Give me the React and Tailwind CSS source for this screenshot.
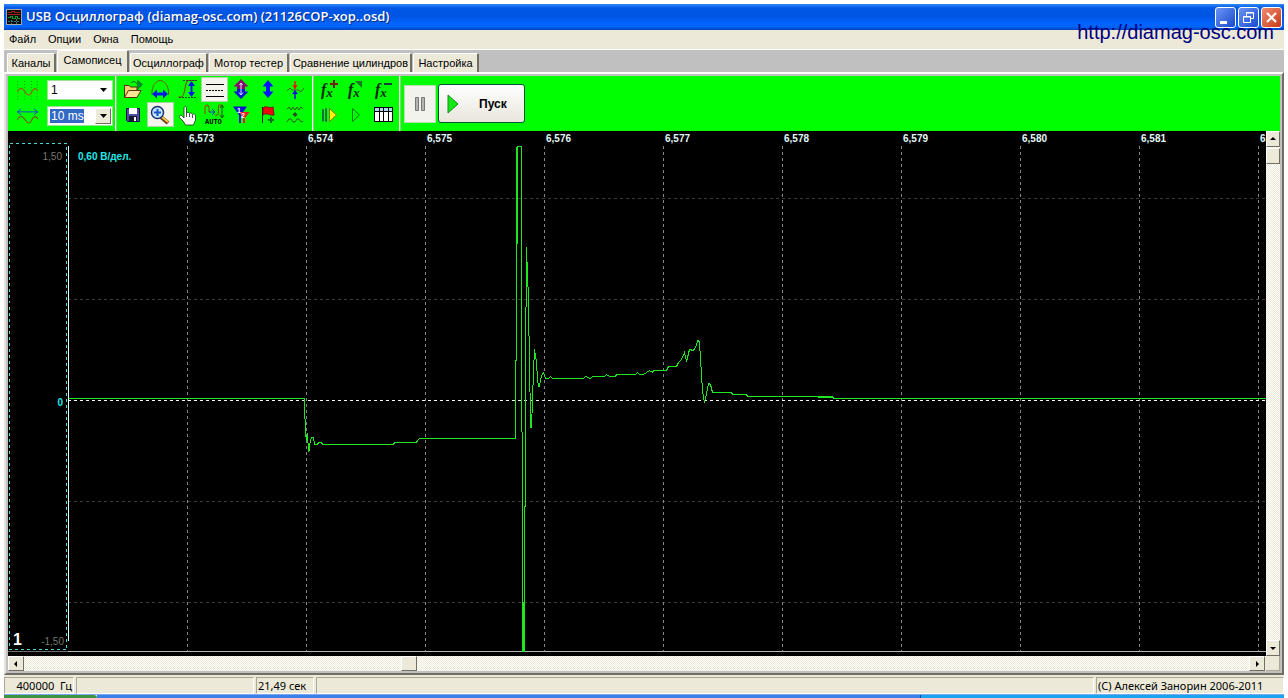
import React, { useState } from "react";
import clsx from "clsx";

const tabs = [
  { label: "Каналы", width: "w-[49px]" },
  { label: "Самописец", width: "w-[72px]" },
  { label: "Осциллограф", width: "w-[78px]" },
  { label: "Мотор тестер", width: "w-[80px]" },
  { label: "Сравнение цилиндров", width: "w-[122px]" },
  { label: "Настройка", width: "w-[66px]" },
];

const menu = ["Файл", "Опции", "Окна", "Помощь"];

const times = ["6,573", "6,574", "6,575", "6,576", "6,577", "6,578", "6,579", "6,580", "6,581", "6,582"];

const trace =
  "60,267 296,267 296,271 297,303 298,308 299,302 300,320 301,315 302,309 303,306 305,306 306,313 309,313 310,311 313,311 314,313 385,313 386,311 408,311 409,309 411,307 507,307 507,301 508,161 509,15 513,15 513,68 514,520 516,520 517,239 518,116 519,144 520,167 521,239 522,282 523,296 524,269 525,239 526,218 528,231 529,247 530,255 531,255 532,249 533,244 535,241 536,244 537,247 540,247 542,245 544,247 575,247 577,245 582,247 584,245 596,245 598,243 601,245 607,245 608,243 627,243 629,241 631,243 635,243 638,241 641,239 644,241 645,239 658,239 660,235 668,235 670,231 673,228 676,221 678,230 681,218 685,219 688,214 689,209 691,210 692,228 694,259 696,271 698,262 700,252 702,253 704,261 723,261 724,263 738,263 739,265 809,265 824,265 825,267 2400,267";

// 27x25 toolbar cell
const Glyph = ({ children }) => (
  <svg viewBox="0 0 27 25" className="block h-[25px] w-[27px]" fill="none" aria-hidden="true">
    {children}
  </svg>
);

const fx = (
  <text x="4" y="18" fontFamily="Liberation Serif, serif" fontSize="16" fontStyle="italic" fontWeight="bold" fill="#062806">
    f<tspan dy="2" fontSize="13">x</tspan>
  </text>
);

const viewTools = [
  {
    name: "Открыть",
    art: (
      <>
        <path d="M4.500 20V8.500H9L10.500 10H17V14" fill="#f4d070" stroke="#4a2c00" />
        <path d="M4.500 20.500L8.500 13.500H21L17 20.500Z" fill="#ffe498" stroke="#5a3500" />
        <path d="M11 6C13 4 15 4 17 7" stroke="#105030" />
        <path d="M17.500 3L22.500 7.500L17.500 13Z" fill="#008b28" stroke="#006020" strokeWidth=".5" />
      </>
    ),
  },
  {
    name: "Период",
    art: (
      <>
        <path d="M5 18V14C6 7 10 3.500 13 3.500C17 3.500 21 8 21.500 14V18" stroke="#6d5d10" />
        <path d="M5 17L10 12.500V15.500H16V12.500L21 17L16 21.500V18.500H10V21.500Z" fill="#0018e8" />
      </>
    ),
  },
  {
    name: "Амплитуда",
    art: (
      <>
        <path d="M4 20H7C12 20 10 5 14 3.500H21" stroke="#82501b" strokeWidth="1.200" />
        <path d="M9 3.500H23M5 20.500H23" stroke="#155020" strokeDasharray="2 1" />
        <path d="M17.500 4L21 9H18.500V15H21L17.500 20L14 15H16.500V9H14Z" fill="#0018e8" />
      </>
    ),
  },
  {
    name: "Уровни",
    active: true,
    art: (
      <g stroke="#000" strokeWidth="1" shapeRendering="crispEdges">
        <path d="M5 7.500H23M5 19.500H23" />
        <path d="M5 13.500H23" strokeDasharray="2 1" />
      </g>
    ),
  },
  {
    name: "Масштаб по вертикали",
    art: (
      <>
        <path d="M13 2L20.500 9.500H17V12H9V9.500H5.500Z" fill="#850b6c" />
        <path d="M9 12H17V14.500H20.500L13 22L5.500 14.500H9Z" fill="#0014d8" />
        <path d="M13 6V18M11.500 8L13 6L14.500 8M11 15.500L13 18L15 15.500" stroke="#e4dcff" />
      </>
    ),
  },
  { name: "Высота", art: <path d="M13 3L18.500 9.500H15V14.500H18.500L13 21L7.500 14.500H11V9.500H7.500Z" fill="#0012ff" /> },
  {
    name: "Точка",
    art: (
      <>
        <path d="M5 14L8 11L10 13H16L19 15L22 11" stroke="#426711" />
        <path d="M13 4V10" stroke="#e01810" strokeWidth="1.500" />
        <path d="M10.500 8H15.500L13 13Z" fill="#f01208" />
        <path d="M13 13L16 17H10Z" fill="#0012d8" />
        <path d="M13 15V22" stroke="#0012d8" strokeWidth="1.500" />
      </>
    ),
  },
  {
    name: "Сохранить",
    art: (
      <>
        <path d="M6.500 6.500H19.500V19.500H7.500L6.500 18.500Z" fill="#4b4f9d" stroke="#101044" />
        <rect x="9" y="6" width="8" height="6" fill="#fff" />
        <rect x="9" y="14" width="8" height="5" fill="#181830" />
        <rect x="14" y="15" width="2" height="4" fill="#fff" />
      </>
    ),
  },
  {
    name: "Лупа",
    active: true,
    art: (
      <>
        <path d="M14 15L21 21" stroke="#5d4515" strokeWidth="4" />
        <path d="M15 15L21 20" stroke="#ffc34d" strokeWidth="2" />
        <circle cx="10.500" cy="10.500" r="6" fill="#c6e8ff" stroke="#1b2f75" strokeWidth="1.500" />
        <path d="M7 10.500H14M10.500 7V14" stroke="#1555c7" strokeWidth="2" />
      </>
    ),
  },
  {
    name: "Рука",
    art: (
      <path
        d="M10 16V6C10 4 12.500 4 12.500 6V11C13 10 15 10 15.500 11.500C16.500 10.500 18 11 18.500 12.500C20 11.500 21.500 12 21.500 14V18L19.500 23H11.500L9 19L5.500 15.500C4.500 13 7.500 12 10 16ZM12.500 11V15M15.500 12V15M18.500 13V16"
        fill="#fff"
        stroke="#182c18"
        strokeWidth=".8"
      />
    ),
  },
  {
    name: "Авто",
    art: (
      <>
        <path d="M4 12V6C5 1 8 3 8 7V10M14 13C20 15 16 5 18 3H22" stroke="#8c5310" strokeWidth="1.200" />
        <path d="M8 10H13M11 7L14 10L11 13" stroke="#173bb5" />
        <path d="M21 4V16M19 6L21 3L23 6M19 13L21 16L23 13" stroke="#17501b" />
        <text x="4" y="22" fontFamily="Liberation Mono, monospace" fontWeight="bold" fontSize="7" fill="#000">
          AUTO
        </text>
      </>
    ),
  },
  {
    name: "Маркеры",
    art: (
      <>
        <path d="M5 4.500H19L13 13V21H11V13Z" fill="#0716ce" />
        <path d="M11 10H21.500L17 16V21H15V16Z" fill="#ee1a26" />
        <text x="9" y="11" fontFamily="Liberation Sans, sans-serif" fontWeight="bold" fontSize="7" fill="#fff">
          1
        </text>
        <text x="13" y="16" fontFamily="Liberation Sans, sans-serif" fontWeight="bold" fontSize="7" fill="#fff">
          2
        </text>
      </>
    ),
  },
  {
    name: "Флаг",
    art: (
      <>
        <path d="M7.500 5V21" stroke="#172010" />
        <path d="M8 6C11 3 14 7 18 5L19 13C15 14 12 10 8 13Z" fill="#ef080c" stroke="#761407" />
        <path d="M16 15V21M13 18H19" stroke="#08731e" strokeWidth="2" />
      </>
    ),
  },
  {
    name: "Сравнить волны",
    art: (
      <>
        <path d="M5 7L7 5L9 8L11 5L13 8L15 5L17 8L19 5L21 7" stroke="#345c1b" />
        <path d="M5 20L7 17L9 17L11 20L13 20L15 17L17 17L19 20L21 19" stroke="#345c1b" />
        <path d="M13 10L15.500 12.500L13 15L10.500 12.500Z" fill="#244a26" />
      </>
    ),
  },
];

const mathTools = [
  { name: "Добавить функцию", art: <>{fx}<path d="M17 3V11M13 7H21" stroke="#751e16" strokeWidth="2" /></> },
  { name: "Изменить функцию", art: <>{fx}<path d="M11 4H18V11Z" fill="#16791d" /></> },
  { name: "Удалить функцию", art: <>{fx}<path d="M13 7H21" stroke="#164044" strokeWidth="2" /></> },
  {
    name: "Следующий кадр",
    art: (
      <>
        <path d="M5.500 19.500V7.500H6.500V19.500M8.500 19.500V6.500H9.500V19.500Z" fill="#65eb9b" stroke="#12733a" />
        <path d="M12.500 6.500L19.500 13L12.500 19.500Z" fill="#fff600" stroke="#827513" />
      </>
    ),
  },
  { name: "Воспроизвести", art: <path d="M8.500 6.500L15.500 13L8.500 19.500Z" stroke="#087c0b" /> },
  {
    name: "Таблица",
    art: (
      <g shapeRendering="crispEdges">
        <path d="M3.500 5.500H21.500V19.500H3.500Z" fill="#fff" stroke="#000" />
        <path d="M4 6H21V9H4Z" fill="#a9daef" />
        <path d="M4 9.500H21M8.500 6V19M12.500 6V19M17.500 6V19" stroke="#000" />
      </g>
    ),
  },
];

const ToolGrid = ({ tools, columns }) => (
  <div className={clsx("mt-px mr-px ml-[3px] grid content-start", columns)}>
    {tools.map((tool) => (
      <button
        key={tool.name}
        aria-label={tool.name}
        className={clsx("h-[25px] w-[27px]", tool.active && "bg-[#f5f4ec] ring-1 ring-inset ring-[#a4dba0]")}
      >
        <Glyph>{tool.art}</Glyph>
      </button>
    ))}
  </div>
);

const Divider = () => <div className="w-0.5 border-l border-[#f0ffe8] bg-[#85d47c]" />;

const Combo = ({ label, value, options, selected }) => (
  <div className="relative h-5 w-[66px] border border-[#9ce294] bg-white">
    <select
      aria-label={label}
      defaultValue={value}
      className={clsx(
        "block h-full w-full appearance-none px-[3px] text-xs leading-4 outline-none",
        selected
          ? "bg-[linear-gradient(#316ac5,#316ac5)] bg-[length:34px_14px] bg-[position:2px_2px] bg-no-repeat text-white"
          : "text-black"
      )}
    >
      {options.map((o) => (
        <option key={o}>{o}</option>
      ))}
    </select>
    <div
      className={clsx(
        "pointer-events-none absolute inset-y-px right-px flex w-4 items-center justify-center",
        selected && "border border-r-[#716f64] border-b-[#716f64] border-t-white border-l-white bg-[#ece9d8]"
      )}
    >
      <svg viewBox="0 0 7 4" className="h-1 w-[7px]">
        <path d="M0 0H7L3.500 4Z" fill="#000" />
      </svg>
    </div>
  </div>
);

const arrows = {
  up: "M4 2L7 5H1Z",
  down: "M1 3H7L4 6Z",
  left: "M5 1V7L2 4Z",
  right: "M3 1L6 4L3 7Z",
};

const ScrollButton = ({ dir, label, className }) => (
  <button
    aria-label={label}
    className={clsx(
      "flex shrink-0 items-center justify-center border border-t-white border-l-white border-r-[#716f64] border-b-[#716f64] bg-[#ece9d8]",
      className
    )}
  >
    {dir && (
      <svg viewBox="0 0 8 8" className="size-2">
        <path d={arrows[dir]} fill="#000" />
      </svg>
    )}
  </button>
);

const track = "bg-[repeating-conic-gradient(#fff_0_25%,#ece9d8_0_50%)] bg-[length:2px_2px]";

const Chart = () => (
  <svg className="block h-[525px] w-full min-w-0 flex-1 bg-black" role="img" aria-label="Осциллограмма">
    <g shapeRendering="crispEdges" fill="none">
      {[67, 168, 370, 471].map((y) => (
        <line key={y} x1="60" x2="100%" y1={y + 0.5} y2={y + 0.5} stroke="#3c3c3c" strokeDasharray="3 3" />
      ))}
      {times.map((t, i) => (
        <line key={t} x1={179.5 + i * 119} x2={179.5 + i * 119} y1="15" y2="520" stroke="#858585" strokeDasharray="3 3" />
      ))}
      <line x1="60" x2="100%" y1="269.500" y2="269.500" stroke="#fff" strokeDasharray="3 3" />
      <rect x="1.500" y="12.500" width="57" height="506" stroke="#4cd8d8" strokeDasharray="3 3" />
      <line x1="60.500" x2="60.500" y1="15" y2="510" stroke="#e8ffff" />
      <line x1="0" x2="60" y1="520.500" y2="520.500" stroke="#707070" />
      <line x1="60" x2="100%" y1="520.500" y2="520.500" stroke="#b4b8b4" />
      <g transform="translate(0.5 0.5)" stroke="#1fe81f">
        <polyline points={trace} />
        <path d="M508.500 15V112M518.500 132V148M514.500 470V520M522.500 283V296M300.500 314V319M809 265.500H824" strokeWidth="2" />
      </g>
    </g>
    <g fontFamily="Liberation Sans, sans-serif" fontSize="10">
      <g fontWeight="bold" fill="#e0f8f8">
        {times.map((t, i) => (
          <text key={t} x={181 + i * 119} y="11">
            {t}
          </text>
        ))}
      </g>
      <g fontWeight="bold" fill="#20e8e8">
        <text x="70" y="29">0,60 В/дел.</text>
        <text x="55" y="275" textAnchor="end">0</text>
      </g>
      <g fill="#77776c" textAnchor="end">
        <text x="54" y="29">1,50</text>
        <text x="56" y="514">-1,50</text>
      </g>
      <text x="5" y="514" fontSize="16" fontWeight="bold" fill="#fff">1</text>
    </g>
  </svg>
);

const WindowButton = ({ label, close, children }) => (
  <button
    aria-label={label}
    className={clsx(
      "size-[21px] rounded-[3px] border border-white bg-linear-to-br",
      close ? "from-[#ee8b6c] to-[#c83412]" : "from-[#6b93f4] to-[#1849cc]"
    )}
  >
    <svg viewBox="0 0 19 19" className="size-[19px]" fill="none" stroke="#fff">
      {children}
    </svg>
  </button>
);

const StatusPanel = ({ className, children }) => (
  <div
    className={clsx(
      "h-[17px] overflow-hidden whitespace-nowrap border border-t-[#aca899] border-l-[#aca899] border-r-white border-b-white px-px leading-4",
      className
    )}
  >
    {children}
  </div>
);

const App = () => {
  const [activeTab, setActiveTab] = useState("Самописец");

  return (
    <div className="overflow-hidden bg-white px-1 pt-1 font-['Liberation_Sans',sans-serif] text-[11px] text-black">
      {/* Title bar */}
      <header className="relative flex h-[26px] items-center bg-[linear-gradient(#2f8af5,#0058e6_4px,#0054e3_12px,#0065ff_20px,#0062f5_23px,#0140b8)] px-0.5">
        <svg viewBox="0 0 16 16" className="size-4" shapeRendering="crispEdges" fill="none" aria-hidden="true">
          <path d="M.5.500H15.500V15.500H.5Z" fill="#080c0c" stroke="#a8a8a8" />
          <path d="M2 3H5V2H8V3H14M2 5H14" stroke="#a02018" />
          <path d="M2 8.500H4V7H6V9H9V7H11V9H14" stroke="#169828" />
          <path d="M5 11V15M10 10V15M2 12.500H14" stroke="#397e78" strokeDasharray="2 1" />
        </svg>
        <h1 className="ml-1 font-['Open_Sans',sans-serif] text-[13px] font-semibold whitespace-nowrap text-white [text-shadow:1px_1px_#0a2a82]">
          USB Осциллограф (diamag-osc.com) (21126СОР-хор..osd)
        </h1>
        <div className="ml-auto flex gap-0.5">
          <WindowButton label="Свернуть">
            <path d="M4 14.500H11" strokeWidth="3" />
          </WindowButton>
          <WindowButton label="Восстановить">
            <path d="M7.500 8V4.500H14.500V10.500H12M7 5H15M4.500 8.500H11.500V14.500H4.500ZM4 9H12" />
          </WindowButton>
          <WindowButton label="Закрыть" close>
            <path d="M5 5L14 14M14 5L5 14" strokeWidth="2.200" />
          </WindowButton>
        </div>
        <a
          href="http://diamag-osc.com"
          className="absolute top-4 right-2.5 text-xl leading-6 text-[#000080]"
        >
          http://diamag-osc.com
        </a>
      </header>

      {/* Menu */}
      <nav className="flex h-5 items-center gap-3 border-b border-white bg-[#ece9d8] pl-[5px]">
        {menu.map((item) => (
          <button key={item}>{item}</button>
        ))}
      </nav>

      {/* Tabs */}
      <div role="tablist" className="flex h-[22px] items-end gap-px bg-[#c0c0c0] pl-[3px]">
        {tabs.map((tab) => {
          const active = tab.label === activeTab;
          return (
            <button
              key={tab.label}
              role="tab"
              aria-selected={active}
              onClick={() => setActiveTab(tab.label)}
              className={clsx(
                "rounded-t-[2px] border-t border-r-2 border-l border-t-white border-r-[#716f64] border-l-white bg-[#ece9d8] whitespace-nowrap",
                active ? "h-[22px] pb-0.5" : "h-[19px]",
                tab.width
              )}
            >
              {tab.label}
            </button>
          );
        })}
      </div>

      <main className="border-x-2 border-y-2 border-t-white border-r-[#716f64] border-b-[#716f64] border-l-[#e4e2da] bg-[#c0c0c0] px-0.5 pt-0.5">
        {/* Toolbar */}
        <div className="flex h-[55px] bg-[#00ff00]">
          <div className="flex w-[107px] gap-2 py-1 pl-2">
            <div className="flex flex-col gap-1">
              <svg viewBox="0 0 23 22" className="h-[22px] w-[23px]" fill="none" aria-hidden="true">
                <path d="M1.500 1V21M8.500 1V21M15.500 1V21M21.500 1V21" stroke="#0a9a14" strokeDasharray="1 2" />
                <path d="M1 12C4 7 6 8 9 12C12 17 14 16 16 12C18 8 20 8 22 11" stroke="#966014" strokeWidth="1.200" />
              </svg>
              <svg viewBox="0 0 23 22" className="h-[22px] w-[23px]" fill="none" aria-hidden="true">
                <path d="M1 6H22M5 3L1 6L5 9M18 3L22 6L18 9" stroke="#144abf" />
                <path d="M1 14C4 9 6 10 9 14C12 19 14 18 16 14C18 10 20 10 22 13" stroke="#765a14" strokeWidth="1.200" />
              </svg>
            </div>
            <div className="flex flex-col gap-1.5">
              <Combo label="Канал" value="1" options={["1", "2", "3", "4"]} />
              <Combo label="Развёртка" value="10 ms" options={["1 ms", "10 ms", "100 ms"]} selected />
            </div>
          </div>
          <Divider />
          <ToolGrid tools={viewTools} columns="grid-cols-[repeat(7,27px)]" />
          <div className="w-0.5" />
          <Divider />
          <ToolGrid tools={mathTools} columns="grid-cols-[repeat(3,27px)]" />
          <Divider />
          <div className="flex items-center gap-0.5 px-[3px]">
            <button
              aria-label="Пауза"
              className="flex h-[38px] w-8 items-center justify-center border border-[#b5dfb0] bg-[#f3f3ed]"
            >
              <svg viewBox="0 0 12 16" className="h-4 w-3">
                <path d="M1.500 1.500H4.500V14.500H1.500ZM7.500 1.500H10.500V14.500H7.500Z" fill="#b4b4b4" stroke="#777" />
              </svg>
            </button>
            <button className="flex h-[39px] w-[87px] items-center gap-5 rounded-[3px] border border-[#00543c] bg-linear-to-b from-white to-[#e8e6dc] pl-2 text-xs font-bold">
              <svg viewBox="0 0 12 20" className="h-5 w-3">
                <path d="M1 1L11 10L1 19Z" fill="#12e812" stroke="#168b25" />
              </svg>
              Пуск
            </button>
          </div>
        </div>

        {/* Chart with its scrollbars */}
        <div className="flex">
          <Chart />
          <div className={clsx("flex w-3.5 flex-col", track)}>
            <ScrollButton dir="up" label="Вверх" className="h-4 w-3.5" />
            <ScrollButton label="Позиция по вертикали" className="mt-px h-4 w-3.5" />
            <div className="flex-1" />
            <ScrollButton dir="down" label="Вниз" className="h-4 w-3.5" />
          </div>
        </div>
        <div className="flex h-[15px] bg-[#ece9d8]">
          <div className={clsx("mr-px flex flex-1", track)}>
            <ScrollButton dir="left" label="Влево" className="w-4" />
            <div className="w-[30%]" />
            <ScrollButton label="Позиция по горизонтали" className="w-4" />
            <div className="flex-1" />
            <ScrollButton dir="right" label="Вправо" className="w-4" />
          </div>
          <div className="w-3.5 border-r border-b border-[#aca899]" />
        </div>
        <div className="h-0.5" />
      </main>

      {/* Status bar */}
      <footer className="flex gap-0.5 bg-[#ece9d8] pt-0.5 font-['Noto_Sans',sans-serif]">
        <StatusPanel className="w-[70px] text-right">400000&nbsp; Гц</StatusPanel>
        <StatusPanel className="w-[178px]" />
        <StatusPanel className="w-[58px]">21,49 сек</StatusPanel>
        <StatusPanel className="flex-1" />
        <StatusPanel className="w-[188px]">(C) Алексей Занорин 2006-2011</StatusPanel>
      </footer>
      <div className="flex h-1 border-t border-[#78a8f4]">
        <div className="w-[93px] rounded-tr bg-[#3c9440]" />
        <div className="flex-[824] bg-[#3a80e8]" />
        <div className="flex-[363] border-l border-[#134a92] bg-[#18a4ee]" />
      </div>
    </div>
  );
};

export default App;
